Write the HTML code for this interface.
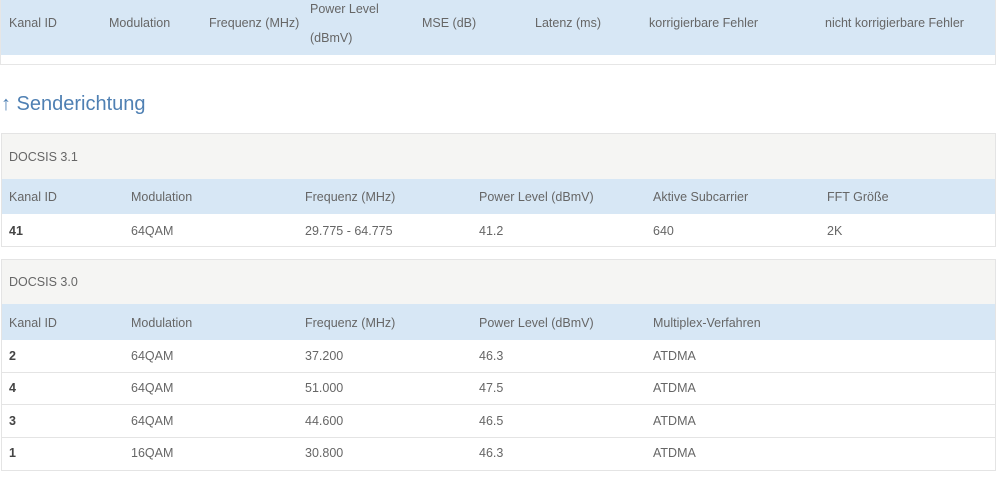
<!DOCTYPE html><html><head><style>
body{margin:0;width:999px;height:483px;background:#fff;font-family:"Liberation Sans",sans-serif;font-size:12.5px;color:#666;position:relative;overflow:hidden}
div{position:absolute;box-sizing:border-box}
.t{white-space:nowrap}
.blue{background:#d7e7f5}
.gray{background:#f5f5f3}
.line{height:1px;background:#e4e4e4}
b{color:#444}
</style></head><body>
<div style="left:0;top:0;width:996px;height:65px;border:1px solid #e6e6e6;border-top:none"></div>
<div class="blue" style="left:1px;top:0;width:994px;height:55px"></div>
<div class="t" style="left:9px;top:16px">Kanal ID</div>
<div class="t" style="left:109px;top:16px">Modulation</div>
<div class="t" style="left:209px;top:16px">Frequenz (MHz)</div>
<div class="t" style="left:310px;top:-5px;line-height:29px">Power Level<br>(dBmV)</div>
<div class="t" style="left:422px;top:16px">MSE (dB)</div>
<div class="t" style="left:535px;top:16px">Latenz (ms)</div>
<div class="t" style="left:649px;top:16px">korrigierbare Fehler</div>
<div class="t" style="left:825px;top:16px">nicht korrigierbare Fehler</div>

<div class="t" style="left:1px;top:93px;font-size:20px;color:#4f80b3">↑ Senderichtung</div>

<div style="left:1px;top:133px;width:995px;height:114px;border:1px solid #e4e4e4"></div>
<div class="gray" style="left:2px;top:134px;width:993px;height:45px"></div>
<div class="t" style="left:9px;top:150px">DOCSIS 3.1</div>
<div class="blue" style="left:2px;top:179px;width:993px;height:35px"></div>
<div class="t" style="left:9px;top:190px">Kanal ID</div>
<div class="t" style="left:131px;top:190px">Modulation</div>
<div class="t" style="left:305px;top:190px">Frequenz (MHz)</div>
<div class="t" style="left:479px;top:190px">Power Level (dBmV)</div>
<div class="t" style="left:653px;top:190px">Aktive Subcarrier</div>
<div class="t" style="left:827px;top:190px">FFT Größe</div>
<div class="t" style="left:9px;top:224px"><b>41</b></div>
<div class="t" style="left:131px;top:224px">64QAM</div>
<div class="t" style="left:305px;top:224px">29.775 - 64.775</div>
<div class="t" style="left:479px;top:224px">41.2</div>
<div class="t" style="left:653px;top:224px">640</div>
<div class="t" style="left:827px;top:224px">2K</div>

<div style="left:1px;top:259px;width:995px;height:212px;border:1px solid #e4e4e4"></div>
<div class="gray" style="left:2px;top:260px;width:993px;height:44px"></div>
<div class="t" style="left:9px;top:275px">DOCSIS 3.0</div>
<div class="blue" style="left:2px;top:304px;width:993px;height:36px"></div>
<div class="t" style="left:9px;top:316px">Kanal ID</div>
<div class="t" style="left:131px;top:316px">Modulation</div>
<div class="t" style="left:305px;top:316px">Frequenz (MHz)</div>
<div class="t" style="left:479px;top:316px">Power Level (dBmV)</div>
<div class="t" style="left:653px;top:316px">Multiplex-Verfahren</div>

<div class="t" style="left:9px;top:349px"><b>2</b></div><div class="t" style="left:131px;top:349px">64QAM</div><div class="t" style="left:305px;top:349px">37.200</div><div class="t" style="left:479px;top:349px">46.3</div><div class="t" style="left:653px;top:349px">ATDMA</div>
<div class="line" style="left:2px;top:372px;width:993px"></div>
<div class="t" style="left:9px;top:381px"><b>4</b></div><div class="t" style="left:131px;top:381px">64QAM</div><div class="t" style="left:305px;top:381px">51.000</div><div class="t" style="left:479px;top:381px">47.5</div><div class="t" style="left:653px;top:381px">ATDMA</div>
<div class="line" style="left:2px;top:404px;width:993px"></div>
<div class="t" style="left:9px;top:414px"><b>3</b></div><div class="t" style="left:131px;top:414px">64QAM</div><div class="t" style="left:305px;top:414px">44.600</div><div class="t" style="left:479px;top:414px">46.5</div><div class="t" style="left:653px;top:414px">ATDMA</div>
<div class="line" style="left:2px;top:437px;width:993px"></div>
<div class="t" style="left:9px;top:446px"><b>1</b></div><div class="t" style="left:131px;top:446px">16QAM</div><div class="t" style="left:305px;top:446px">30.800</div><div class="t" style="left:479px;top:446px">46.3</div><div class="t" style="left:653px;top:446px">ATDMA</div>
</body></html>
